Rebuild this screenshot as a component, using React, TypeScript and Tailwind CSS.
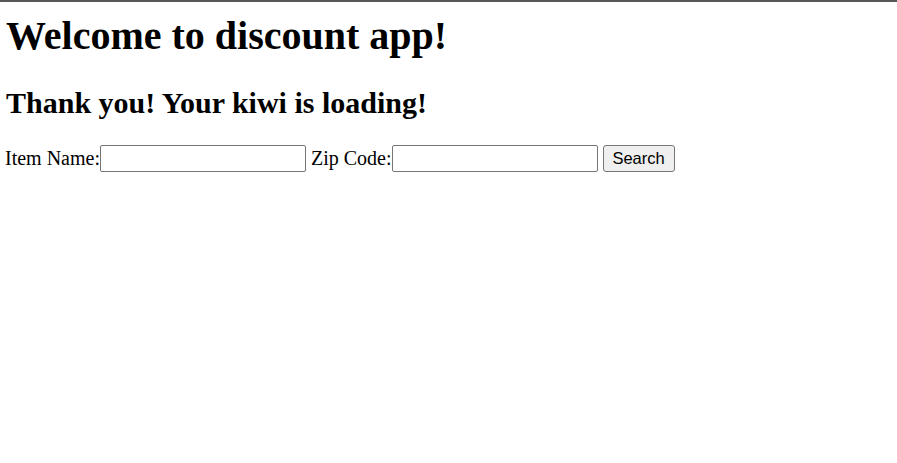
const serif = "font-['Liberation_Serif','Times_New_Roman',serif]";

export default function App() {
  return (
    <div className={`min-h-[463px] bg-white text-black border-t-2 border-[#575757] pl-[6px] ${serif}`}>
      <h1 className="mt-[11px] text-[40px] leading-[46px] font-bold">
        Welcome to discount app!
      </h1>
      <h2 className="mt-[26px] text-[30px] leading-[35px] font-bold">
        Thank you! Your kiwi is loading!
      </h2>
      <form
        className="mt-[25px] -ml-px flex items-center text-[20px] leading-[23px]"
        onSubmit={(e) => e.preventDefault()}
      >
        <label htmlFor="item" className="whitespace-pre">Item Name:</label>
        <input
          id="item"
          type="text"
          className="w-[206px] h-[27px] border border-[#767676] rounded-[2px] bg-white px-[2px] outline-none"
        />
        <label htmlFor="zip" className="whitespace-pre ml-[5px]">Zip Code:</label>
        <input
          id="zip"
          type="text"
          className="w-[206px] h-[27px] border border-[#767676] rounded-[2px] bg-white px-[2px] outline-none"
        />
        <button
          type="submit"
          className="ml-[5px] w-[72px] h-[27px] border border-[#767676] rounded-[3px] bg-[#efefef] font-['Liberation_Sans',Arial,sans-serif] text-[16.5px] leading-none"
        >
          Search
        </button>
      </form>
    </div>
  );
}
